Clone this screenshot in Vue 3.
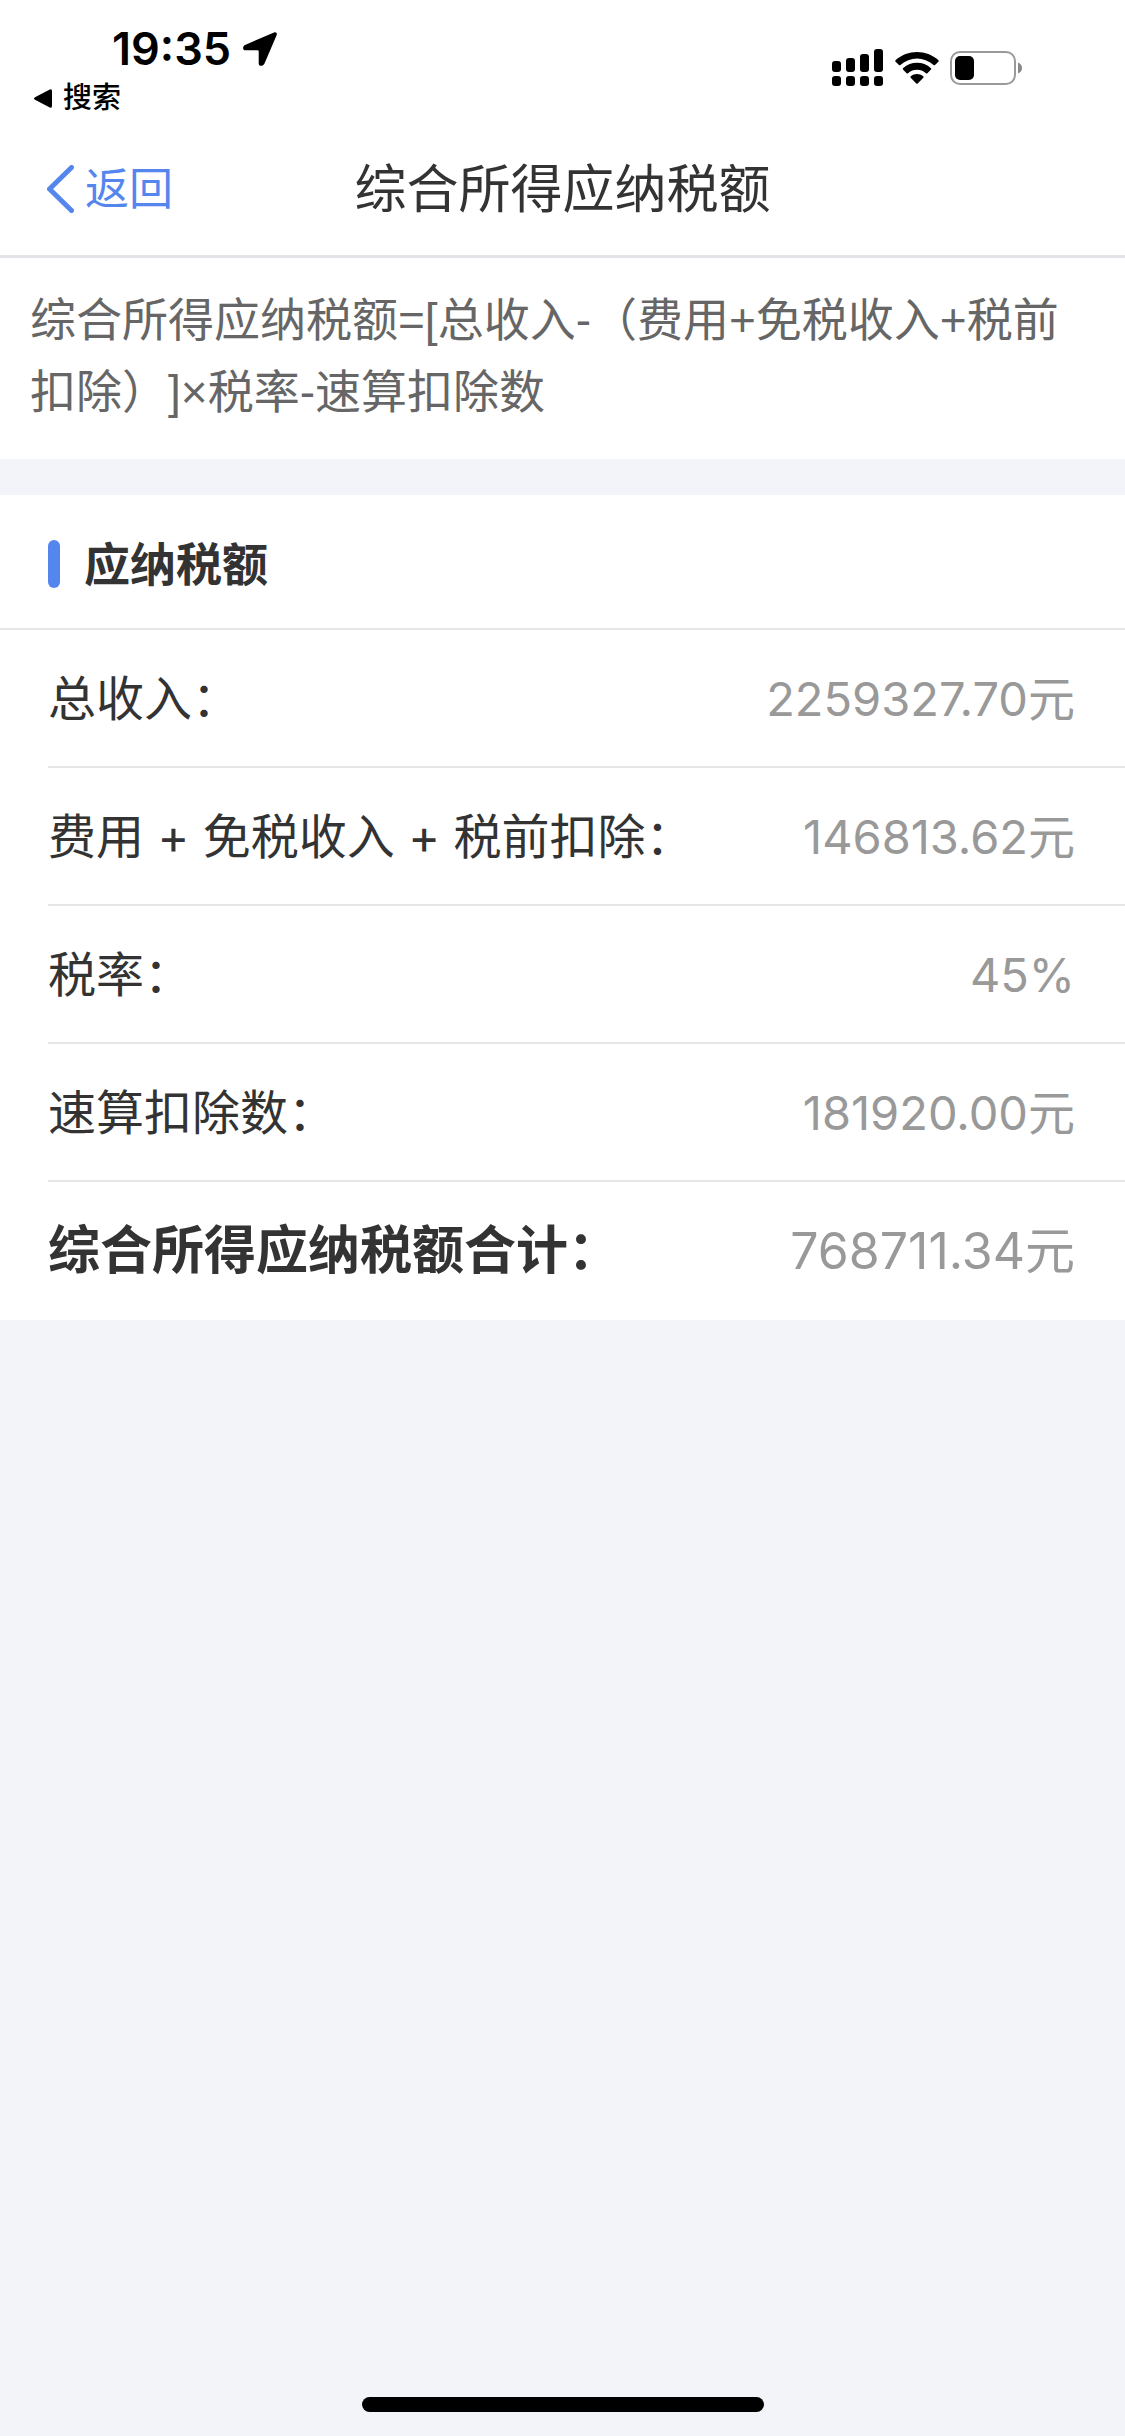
<script setup>
const rows = [
  { label: '总收入：', value: '2259327.70元' },
  { label: '费用 + 免税收入 + 税前扣除：', value: '146813.62元' },
  { label: '税率：', value: '45%' },
  { label: '速算扣除数：', value: '181920.00元' },
  { label: '综合所得应纳税额合计：', value: '768711.34元', total: true },
]
</script>

<template>
  <div class="page">
    <div class="status">
      <div class="status-left">
        <div class="clock">
          <span class="time">19:35</span>
          <svg class="location" viewBox="0 0 34 34" aria-hidden="true">
            <path d="M31 .4C33 -.3 34.3 1 33.700 3L21.500 31.500C20 34.800 15.700 34.500 15.700 31.500V19.500Q15.700 18.300 14.500 18.300H2.500C-.6 18.300 -.6 14.200 2 13Z" />
          </svg>
        </div>
        <a class="crumb" href="#">
          <svg class="crumb-arrow" viewBox="0 0 18 19" aria-hidden="true">
            <path d="M1 8.200 15.800 .5Q18 -.3 18 2V17Q18 19.300 15.800 18.500L1 10.800Q-1 9.500 1 8.200Z" />
          </svg>
          <span>搜索</span>
        </a>
      </div>
      <div class="status-right">
        <svg class="signal" viewBox="0 0 52 37" aria-hidden="true">
          <rect x="0" y="12" width="9" height="11" rx="3" />
          <rect x="14" y="9" width="9" height="14" rx="3" />
          <rect x="28" y="5" width="9" height="18" rx="3" />
          <rect x="42" y="0" width="9" height="23" rx="3" />
          <rect x="0" y="27" width="9" height="10" rx="3" />
          <rect x="14" y="27" width="9" height="10" rx="3" />
          <rect x="28" y="27" width="9" height="10" rx="3" />
          <rect x="42" y="27" width="9" height="10" rx="3" />
        </svg>
        <svg class="wifi" viewBox="0 0 44 32" aria-hidden="true">
          <path d="M.5 8.300C12.500 -2.700 31.500 -2.700 43.500 8.300Q44 9 43.400 9.700L40 13Q39.300 13.600 38.600 13C29 4.300 15 4.300 5.400 13Q4.700 13.600 4 13L.6 9.700Q0 9 .5 8.300Z" />
          <path d="M8 16.200C16 9 28 9 36 16.200Q36.600 17 36 17.600L32.400 21.200Q31.700 21.800 31 21.200C26 16.700 18 16.700 13 21.200Q12.300 21.800 11.600 21.200L8 17.600Q7.400 17 8 16.200Z" />
          <path d="M15.800 24.200C19.500 21.200 24.500 21.200 28.200 24.200Q29 25 28.300 25.700L22.700 31.400Q22 32 21.300 31.400L15.700 25.700Q15 25 15.800 24.200Z" />
        </svg>
        <svg class="battery" viewBox="0 0 73 34" aria-hidden="true">
          <rect x="1" y="1" width="64" height="32" rx="9" fill="none" stroke="#999" stroke-width="2" />
          <rect x="5" y="5" width="19" height="24" rx="5" />
          <path d="M68 11.500Q72 13 72 17T68 22.500Z" fill="#888" />
        </svg>
      </div>
    </div>

    <header class="nav">
      <button class="back" type="button">
        <svg class="chevron" viewBox="0 0 27 48" aria-hidden="true">
          <path d="M24.500 2.500 2.500 24 24.500 45.500" fill="none" stroke="#5586ee" stroke-width="5" stroke-linecap="round" stroke-linejoin="round" />
        </svg>
        <span>返回</span>
      </button>
      <h1 class="title">综合所得应纳税额</h1>
    </header>

    <p class="formula">综合所得应纳税额=[总收入-（费用+免税收入+税前扣除）]×税率-速算扣除数</p>

    <section class="card">
      <h2 class="heading">应纳税额</h2>
      <dl class="list">
        <div v-for="row in rows" :key="row.label" class="row" :class="{ total: row.total }">
          <dt>{{ row.label }}</dt>
          <dd>{{ row.value }}</dd>
        </div>
      </dl>
    </section>

    <div class="home-bar"></div>
  </div>
</template>

<style>
body {
  margin: 0;
  background: #f3f4f9;
}
</style>

<style scoped>
.page {
  min-height: 100vh;
  display: flex;
  flex-direction: column;
  background: #f3f4f9;
  color: #333;
  font-family: Inter, "Noto Sans CJK SC", sans-serif;
  text-spacing-trim: space-all;
}

.status {
  display: flex;
  justify-content: space-between;
  align-items: flex-start;
  height: 120px;
  background: #fff;
  color: #000;
}

.status-left {
  padding: 24px 0 0 34px;
}

.clock {
  display: flex;
  align-items: center;
  gap: 12px;
  padding-left: 78px;
  height: 50px;
}

.time {
  font-size: 45px;
  font-weight: 600;
  line-height: 50px;
}

.location {
  width: 34px;
  height: 34px;
}

.crumb {
  display: flex;
  align-items: center;
  gap: 11px;
  height: 48px;
  color: #000;
  font-size: 29px;
  font-weight: 500;
  line-height: 48px;
  text-decoration: none;
}

.crumb-arrow {
  width: 18px;
  height: 19px;
}

.status-right {
  display: flex;
  align-items: center;
  gap: 11px;
  padding: 49px 102px 0 0;
}

.signal {
  width: 52px;
  height: 37px;
}

.wifi {
  width: 44px;
  height: 32px;
}

.battery {
  width: 73px;
  height: 34px;
}

.nav {
  display: grid;
  grid-template-columns: 1fr auto 1fr;
  align-items: center;
  height: 135px;
  background: #fff;
  border-bottom: 3px solid #e3e3e8;
}

.back {
  justify-self: start;
  display: flex;
  align-items: center;
  gap: 11px;
  margin: 0;
  padding: 2px 0 0 47px;
  border: 0;
  background: none;
  color: #5586ee;
  font-family: inherit;
  font-size: 44px;
  line-height: 64px;
}

.chevron {
  width: 27px;
  height: 48px;
}

.title {
  margin: 0;
  padding-top: 4px;
  font-size: 52px;
  font-weight: 400;
  line-height: 72px;
}

.formula {
  margin: 0 0 36px;
  padding: 26px 30px 31px;
  background: #fff;
  color: #666;
  font-family: "Liberation Sans", "Noto Sans CJK SC", sans-serif;
  font-size: 46px;
  line-height: 72px;
}

.card {
  background: #fff;
}

.heading {
  display: flex;
  align-items: center;
  gap: 24px;
  margin: 0;
  padding: 4px 0 0 48px;
  height: 129px;
  border-bottom: 2px solid #e6e6e9;
  font-size: 46px;
  font-weight: 700;
  line-height: 64px;
}

.heading::before {
  content: "";
  width: 12px;
  height: 48px;
  border-radius: 6px;
  background: #5586ee;
}

.list {
  margin: 0;
}

.row {
  box-sizing: border-box;
  display: flex;
  align-items: center;
  justify-content: space-between;
  height: 138px;
  margin-left: 48px;
  padding: 2px 50px 0 0;
  border-bottom: 2px solid #e6e6e9;
  font-size: 48px;
  line-height: 64px;
}

.row dd {
  margin: 0;
  color: #999;
  font-size: 47px;
}

.row.total {
  padding-top: 0;
  border-bottom: 0;
  font-size: 52px;
}

.row.total dt {
  font-weight: 700;
}

.row.total dd {
  font-size: 50px;
}

.home-bar {
  align-self: center;
  width: 402px;
  height: 15px;
  margin: auto 0 24px;
  border-radius: 8px;
  background: #000;
}
</style>
